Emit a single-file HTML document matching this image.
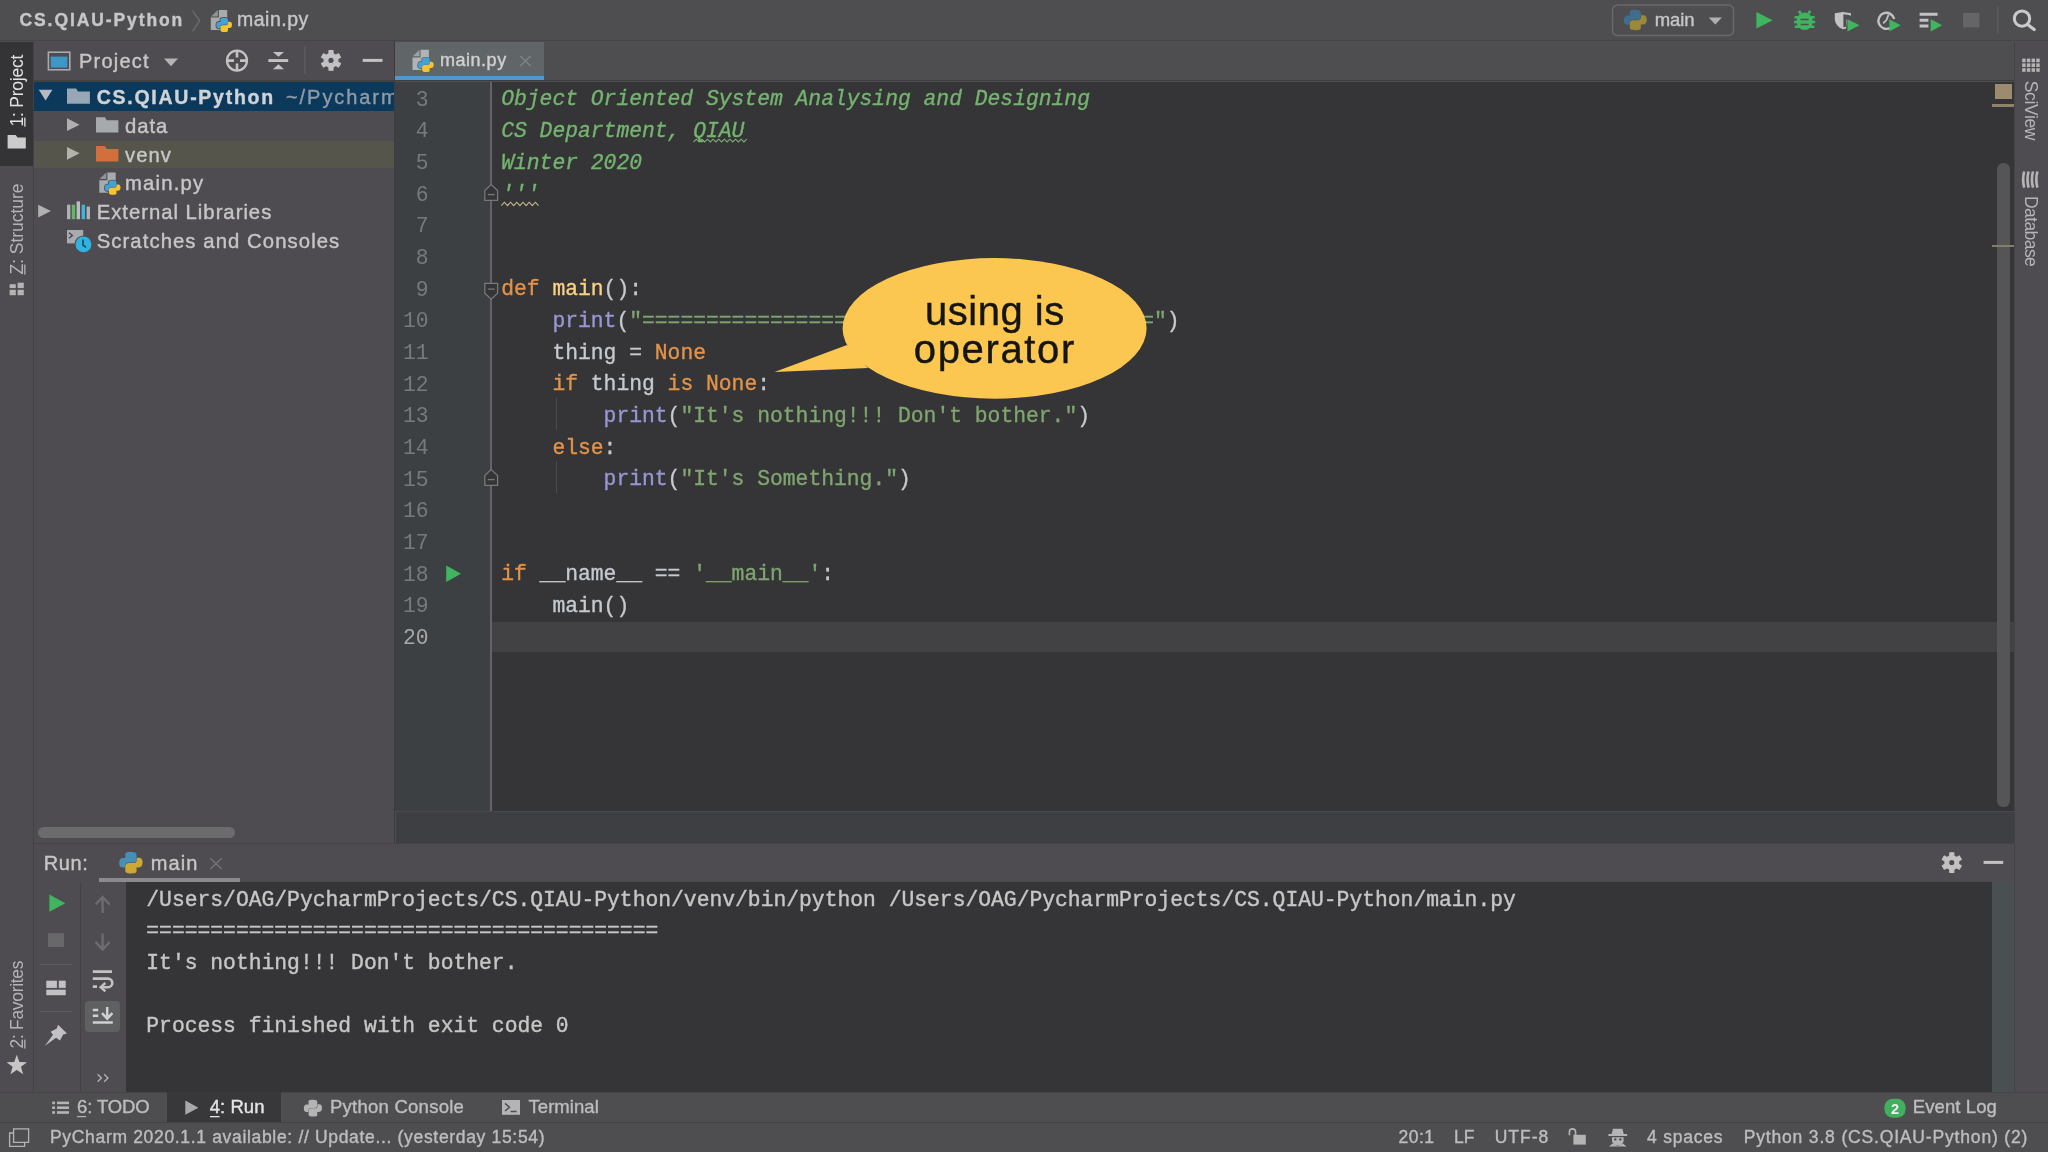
<!DOCTYPE html>
<html><head><meta charset="utf-8"><title>PyCharm</title>
<style>
*{box-sizing:border-box;margin:0;padding:0}
html,body{width:2048px;height:1152px;overflow:hidden;background:#4e4e50;font-family:"Liberation Sans",sans-serif;}
.a{position:absolute}
.t{position:absolute;white-space:pre;-webkit-text-stroke:0.4px currentColor;font-family:"Liberation Sans",sans-serif;}
.ln{position:absolute;left:395px;width:33.6px;text-align:right;font-family:"Liberation Mono",monospace;font-size:21.33px;height:32px;line-height:32px;white-space:pre;}
.cl{position:absolute;left:501.2px;font-family:"Liberation Mono",monospace;font-size:21.33px;height:32px;line-height:32px;white-space:pre;color:#c6cacf;-webkit-text-stroke:0.35px currentColor;}
.co{position:absolute;left:146.3px;font-family:"Liberation Mono",monospace;font-size:21.33px;height:32px;line-height:32px;white-space:pre;color:#c6c6c6;-webkit-text-stroke:0.4px currentColor;}
.kw{color:#e2934a} .s{color:#7fa56f} .doc{color:#73b46f;font-style:italic} .bi{color:#9a96d4} .fn{color:#f7d186}
.wav{}
.wav2{}
svg{position:absolute;overflow:visible}
#root{position:absolute;left:0;top:0;width:2048px;height:1152px;will-change:transform;}
</style></head><body><div id="root">
<!-- ===== base regions ===== -->
<div class="a" style="left:0;top:0;width:2048px;height:40px;background:#4e4e50"></div>
<div class="a" style="left:0;top:39.8px;width:2048px;height:1.7px;background:#454548"></div>
<!-- left stripe -->
<div class="a" style="left:0;top:42px;width:33px;height:1050px;background:#4f4c51"></div>
<div class="a" style="left:0;top:42px;width:33px;height:124px;background:#343437"></div>
<div class="a" style="left:33px;top:42px;width:1px;height:1050px;background:#434346"></div>
<!-- project panel -->
<div class="a" style="left:34px;top:42px;width:360px;height:801px;background:#4f4c51"></div>
<div class="a" style="left:34px;top:80px;width:360px;height:2px;background:#424245"></div>
<div class="a" style="left:34px;top:82px;width:360px;height:28.7px;background:#0b395c"></div>
<div class="a" style="left:34px;top:140.5px;width:360px;height:27.5px;background:#55554b"></div>
<div class="a" style="left:38.3px;top:826.6px;width:197px;height:11.4px;border-radius:6px;background:#6b6b6e"></div>
<div class="a" style="left:393.6px;top:42px;width:1.4px;height:801px;background:#3c3c3f"></div>
<!-- editor tab bar -->
<div class="a" style="left:395px;top:42px;width:1620px;height:38px;background:#4e4e50"></div>
<div class="a" style="left:395px;top:42px;width:148.8px;height:38px;background:#606667"></div>
<div class="a" style="left:395px;top:75.6px;width:148.8px;height:4.6px;background:#5695ca"></div>
<div class="a" style="left:395px;top:80.2px;width:1620px;height:1.3px;background:#3e3e41"></div>
<!-- editor -->
<div class="a" style="left:396px;top:81.5px;width:1619px;height:729px;background:#353436"></div>
<div class="a" style="left:395px;top:81.5px;width:96px;height:729px;background:#3d4043"></div>
<div class="a" style="left:491px;top:621.5px;width:1524px;height:30px;background:#424245"></div>
<div class="a" style="left:490.3px;top:81.5px;width:2px;height:729px;background:#636467"></div>
<div class="a" style="left:396px;top:810.6px;width:1619px;height:1.2px;background:#4a4a4d"></div>
<div class="a" style="left:396px;top:811.8px;width:1619px;height:31.2px;background:#3e3f43"></div>
<!-- indent guides -->
<div class="a" style="left:556px;top:398px;width:1px;height:32px;background:#4a4b4e"></div>
<div class="a" style="left:556px;top:461px;width:1px;height:32px;background:#4a4b4e"></div>
<!-- editor scrollbar -->
<div class="a" style="left:1997px;top:162.7px;width:12.8px;height:644px;border-radius:6.4px;background:#555558"></div>
<div class="a" style="left:1995px;top:83.5px;width:16.6px;height:15px;background:#9c8b6e"></div>
<div class="a" style="left:1992px;top:104.4px;width:22px;height:2.2px;background:#8e8268"></div>
<div class="a" style="left:1992px;top:245px;width:22px;height:2.2px;background:#837f68"></div>
<!-- right stripe -->
<div class="a" style="left:2015px;top:42px;width:33px;height:1050px;background:#4f4c51"></div>
<div class="a" style="left:2014px;top:42px;width:1px;height:1050px;background:#434346"></div>
<!-- run panel -->
<div class="a" style="left:34px;top:843px;width:1980px;height:39px;background:#4f4c51"></div>
<div class="a" style="left:34px;top:842.5px;width:1980px;height:1.5px;background:#434346"></div>
<div class="a" style="left:99px;top:878px;width:141px;height:4px;background:#8b8b8e"></div>
<div class="a" style="left:34px;top:882px;width:92px;height:210px;background:#4f4c51"></div>
<div class="a" style="left:79.5px;top:882px;width:1px;height:210px;background:#434346"></div>
<div class="a" style="left:126px;top:882px;width:1888px;height:210px;background:#353436"></div>
<div class="a" style="left:1992px;top:882px;width:22px;height:210px;background:#4a4f51"></div>
<div class="a" style="left:84.8px;top:1001px;width:35.5px;height:31.4px;border-radius:4px;background:#5e6062"></div>
<div class="a" style="left:40px;top:963.5px;width:32px;height:1px;background:#5d5d60"></div>
<div class="a" style="left:40px;top:1011px;width:32px;height:1px;background:#5d5d60"></div>
<!-- bottom bars -->
<div class="a" style="left:0;top:1092px;width:2048px;height:30px;background:#4e4e50"></div>
<div class="a" style="left:0;top:1091.5px;width:2048px;height:1px;background:#434346"></div>
<div class="a" style="left:167px;top:1092px;width:114px;height:30px;background:#38383b"></div>
<div class="a" style="left:0;top:1122px;width:2048px;height:30px;background:#4e4e50"></div>
<div class="a" style="left:0;top:1121.5px;width:2048px;height:1px;background:#434346"></div>

<!-- ===== code ===== -->
<div class='ln' style='top:83.81px;color:#78797c'>3</div>
<div class='cl' style='top:83.31px'><span class='doc'>Object Oriented System Analysing and Designing</span></div>
<div class='ln' style='top:115.47px;color:#78797c'>4</div>
<div class='cl' style='top:114.97px'><span class='doc'>CS Department, </span><span class='doc wav'>QIAU</span></div>
<div class='ln' style='top:147.13px;color:#78797c'>5</div>
<div class='cl' style='top:146.63px'><span class='doc'>Winter 2020</span></div>
<div class='ln' style='top:178.79px;color:#78797c'>6</div>
<div class='cl' style='top:178.29px'><span class='doc wav2'>'''</span></div>
<div class='ln' style='top:210.45px;color:#78797c'>7</div>
<div class='ln' style='top:242.11px;color:#78797c'>8</div>
<div class='ln' style='top:273.77px;color:#78797c'>9</div>
<div class='cl' style='top:273.27px'><span class='kw'>def </span><span class='fn'>main</span>():</div>
<div class='ln' style='top:305.43px;color:#78797c'>10</div>
<div class='cl' style='top:304.93px'>    <span class='bi'>print</span>(<span class='s'>&quot;========================================&quot;</span>)</div>
<div class='ln' style='top:337.09px;color:#78797c'>11</div>
<div class='cl' style='top:336.59px'>    thing = <span class='kw'>None</span></div>
<div class='ln' style='top:368.75px;color:#78797c'>12</div>
<div class='cl' style='top:368.25px'>    <span class='kw'>if</span> thing <span class='kw'>is None</span>:</div>
<div class='ln' style='top:400.41px;color:#78797c'>13</div>
<div class='cl' style='top:399.91px'>        <span class='bi'>print</span>(<span class='s'>&quot;It&#x27;s nothing!!! Don&#x27;t bother.&quot;</span>)</div>
<div class='ln' style='top:432.07px;color:#78797c'>14</div>
<div class='cl' style='top:431.57px'>    <span class='kw'>else</span>:</div>
<div class='ln' style='top:463.73px;color:#78797c'>15</div>
<div class='cl' style='top:463.23px'>        <span class='bi'>print</span>(<span class='s'>&quot;It&#x27;s Something.&quot;</span>)</div>
<div class='ln' style='top:495.39px;color:#78797c'>16</div>
<div class='ln' style='top:527.05px;color:#78797c'>17</div>
<div class='ln' style='top:558.71px;color:#78797c'>18</div>
<div class='cl' style='top:558.21px'><span class='kw'>if</span> __name__ == <span class='s'>&#x27;__main__&#x27;</span>:</div>
<div class='ln' style='top:590.37px;color:#78797c'>19</div>
<div class='cl' style='top:589.87px'>    main()</div>
<div class='ln' style='top:622.03px;color:#a9a9aa'>20</div>
<!-- ===== console ===== -->
<div class='co' style='top:883.51px'>/Users/OAG/PycharmProjects/CS.QIAU-Python/venv/bin/python /Users/OAG/PycharmProjects/CS.QIAU-Python/main.py</div>
<div class='co' style='top:915.25px'>========================================</div>
<div class='co' style='top:946.99px'>It&#x27;s nothing!!! Don&#x27;t bother.</div>
<div class='co' style='top:978.73px'></div>
<div class='co' style='top:1010.47px'>Process finished with exit code 0</div>
<!-- ===== bubble ===== -->
<svg style="left:0;top:0" width="2048" height="1152" viewBox="0 0 2048 1152">
 <path d="M774.5 371.9 L847 345 L868 368 Z" fill="#fbc750"/>
 <ellipse cx="994.6" cy="328.4" rx="152" ry="70.3" fill="#fbc750"/>
</svg>
<!-- ===== texts ===== -->
<div class='t' style="left:19.5px;top:8.64px;height:23px;line-height:23px;font-size:17.5px;font-weight:700;color:#c6c6c7;letter-spacing:1.901px;">CS.QIAU-Python</div>
<div class='t' style="left:237.0px;top:7.14px;height:25px;line-height:25px;font-size:19.5px;font-weight:400;color:#c6c6c7;letter-spacing:0.495px;">main.py</div>
<div class='t' style="left:1654.7px;top:7.99px;height:24px;line-height:24px;font-size:18.5px;font-weight:400;color:#c6c6c7;letter-spacing:-0.084px;">main</div>
<div class='t' style="left:79.0px;top:47.67px;height:26px;line-height:26px;font-size:20px;font-weight:400;color:#c6c6c7;letter-spacing:1.216px;">Project</div>
<div class='t' style="left:440.0px;top:48.96px;height:23px;line-height:23px;font-size:18px;font-weight:400;color:#d0d0d1;letter-spacing:0.518px;">main.py</div>
<div class='t' style="left:96.7px;top:84.94px;height:25px;line-height:25px;font-size:19.5px;font-weight:700;color:#cfd3d8;letter-spacing:1.741px;">CS.QIAU-Python</div>
<div class='t' style="left:286.0px;top:84.27px;height:26px;line-height:26px;font-size:20px;font-weight:400;color:#8f9aa6;letter-spacing:1.936px;width:108px;overflow:hidden;">~/Pycharm</div>
<div class='t' style="left:125.0px;top:112.97px;height:26px;line-height:26px;font-size:20.3px;font-weight:400;color:#c6c6c7;letter-spacing:0.950px;">data</div>
<div class='t' style="left:125.0px;top:141.67px;height:26px;line-height:26px;font-size:20.3px;font-weight:400;color:#c6c6c7;letter-spacing:1.015px;">venv</div>
<div class='t' style="left:125.0px;top:170.37px;height:26px;line-height:26px;font-size:20.3px;font-weight:400;color:#c6c6c7;letter-spacing:1.192px;">main.py</div>
<div class='t' style="left:96.7px;top:199.07px;height:26px;line-height:26px;font-size:20.3px;font-weight:400;color:#c6c6c7;letter-spacing:0.987px;">External Libraries</div>
<div class='t' style="left:96.7px;top:227.77px;height:26px;line-height:26px;font-size:20.3px;font-weight:400;color:#c6c6c7;letter-spacing:1.081px;">Scratches and Consoles</div>
<div class='t' style="left:43.8px;top:850.37px;height:26px;line-height:26px;font-size:20px;font-weight:400;color:#c6c6c7;letter-spacing:0.622px;">Run:</div>
<div class='t' style="left:150.8px;top:850.37px;height:26px;line-height:26px;font-size:20px;font-weight:400;color:#c6c6c7;letter-spacing:1.038px;">main</div>
<div class='t' style="left:77.0px;top:1095.29px;height:24px;line-height:24px;font-size:18.5px;font-weight:400;color:#bcbcbd;letter-spacing:-0.111px;">6: TODO</div>
<div class='t' style="left:209.8px;top:1095.29px;height:24px;line-height:24px;font-size:18.5px;font-weight:400;color:#e4e4e4;letter-spacing:0.032px;">4: Run</div>
<div class='t' style="left:330.0px;top:1095.29px;height:24px;line-height:24px;font-size:18.5px;font-weight:400;color:#bcbcbd;letter-spacing:0.246px;">Python Console</div>
<div class='t' style="left:528.5px;top:1095.29px;height:24px;line-height:24px;font-size:18.5px;font-weight:400;color:#bcbcbd;letter-spacing:0.049px;">Terminal</div>
<div class='t' style="left:1912.8px;top:1095.09px;height:24px;line-height:24px;font-size:18.5px;font-weight:400;color:#bcbcbd;letter-spacing:0.089px;">Event Log</div>
<div class='t' style="left:50.0px;top:1126.04px;height:23px;line-height:23px;font-size:17.5px;font-weight:400;color:#bcbcbd;letter-spacing:0.672px;">PyCharm 2020.1.1 available: // Update... (yesterday 15:54)</div>
<div class='t' style="left:1398.6px;top:1126.04px;height:23px;line-height:23px;font-size:17.5px;font-weight:400;color:#bcbcbd;letter-spacing:0.470px;">20:1</div>
<div class='t' style="left:1454.0px;top:1126.04px;height:23px;line-height:23px;font-size:17.5px;font-weight:400;color:#bcbcbd;letter-spacing:0.096px;">LF</div>
<div class='t' style="left:1494.7px;top:1126.04px;height:23px;line-height:23px;font-size:17.5px;font-weight:400;color:#bcbcbd;letter-spacing:1.005px;">UTF-8</div>
<div class='t' style="left:1647.0px;top:1126.04px;height:23px;line-height:23px;font-size:17.5px;font-weight:400;color:#bcbcbd;letter-spacing:0.773px;">4 spaces</div>
<div class='t' style="left:1743.7px;top:1126.04px;height:23px;line-height:23px;font-size:17.5px;font-weight:400;color:#bcbcbd;letter-spacing:0.833px;">Python 3.8 (CS.QIAU-Python) (2)</div>
<div class='t' style="left:925.0px;top:284.64px;height:52px;line-height:52px;font-size:40px;font-weight:400;color:#151515;letter-spacing:0.503px;">using is</div>
<div class='t' style="left:913.8px;top:322.64px;height:52px;line-height:52px;font-size:40px;font-weight:400;color:#151515;letter-spacing:1.651px;">operator</div>
<!-- ===== icons ===== -->
<svg style="left:0;top:0" width="2048" height="1152" viewBox="0 0 2048 1152">
<path d="M192.6 10.5 L199.6 20.8 L192.6 31.2" fill="none" stroke="#6f6f72" stroke-width="1.3"/>
<g transform="translate(210.8 9.9)"><path d="M0.2 6.5 L7 0 L7 6.5 Z" fill="#a7abad" opacity="0.75"/><path d="M8.1 0 H16.4 V20.2 H0 V7.7 H8.1 Z" fill="#a7abad"/></g><g transform="translate(216.4 17.9) scale(1.560 1.420)"><path d="M2.6 .9C2.6 .3 3.3 0 5 0 6.7 0 7.4 .4 7.4 1.4V3.6C7.4 4.4 6.8 4.9 6 4.9H3.9C3 4.9 2.5 5.5 2.5 6.3V7.3H1.5C.5 7.3 0 6.4 0 5.1 0 3.6 .6 2.8 1.6 2.8H2.6Z" fill="#4e4e50" stroke="#4e4e50" stroke-width="1.1"/><path d="M2.6 .9C2.6 .3 3.3 0 5 0 6.7 0 7.4 .4 7.4 1.4V3.6C7.4 4.4 6.8 4.9 6 4.9H3.9C3 4.9 2.5 5.5 2.5 6.3V7.3H1.5C.5 7.3 0 6.4 0 5.1 0 3.6 .6 2.8 1.6 2.8H2.6Z" transform="rotate(180 5 5)" fill="#4e4e50" stroke="#4e4e50" stroke-width="1.1"/><path d="M2.6 .9C2.6 .3 3.3 0 5 0 6.7 0 7.4 .4 7.4 1.4V3.6C7.4 4.4 6.8 4.9 6 4.9H3.9C3 4.9 2.5 5.5 2.5 6.3V7.3H1.5C.5 7.3 0 6.4 0 5.1 0 3.6 .6 2.8 1.6 2.8H2.6Z" fill="#3fa3d3"/><path d="M2.6 .9C2.6 .3 3.3 0 5 0 6.7 0 7.4 .4 7.4 1.4V3.6C7.4 4.4 6.8 4.9 6 4.9H3.9C3 4.9 2.5 5.5 2.5 6.3V7.3H1.5C.5 7.3 0 6.4 0 5.1 0 3.6 .6 2.8 1.6 2.8H2.6Z" transform="rotate(180 5 5)" fill="#f3c433"/></g>
<rect x="1612.5" y="5" width="121" height="30.4" rx="5" fill="none" stroke="#69696c" stroke-width="1.5"/>
<g transform="translate(1623.8 9.8) scale(2.300 2.040)"><path d="M2.6 .9C2.6 .3 3.3 0 5 0 6.7 0 7.4 .4 7.4 1.4V3.6C7.4 4.4 6.8 4.9 6 4.9H3.9C3 4.9 2.5 5.5 2.5 6.3V7.3H1.5C.5 7.3 0 6.4 0 5.1 0 3.6 .6 2.8 1.6 2.8H2.6Z" fill="#3f6d8e"/><path d="M2.6 .9C2.6 .3 3.3 0 5 0 6.7 0 7.4 .4 7.4 1.4V3.6C7.4 4.4 6.8 4.9 6 4.9H3.9C3 4.9 2.5 5.5 2.5 6.3V7.3H1.5C.5 7.3 0 6.4 0 5.1 0 3.6 .6 2.8 1.6 2.8H2.6Z" transform="rotate(180 5 5)" fill="#9b8838"/></g>
<path d="M1708.7 17.5 L1721.9 17.5 L1715.3000000000002 24.6 Z" fill="#b0b0b1"/>
<path d="M1756.4 12 L1772.6 20.2 L1756.4 28.4 Z" fill="#40b45f"/>
<g fill="#40b45f" stroke="#40b45f"><ellipse cx="1804.6" cy="21.3" rx="8" ry="8.8" stroke="none"/><path d="M1800.8 13.8 L1799 10.9 M1808.4 13.8 L1810.2 10.9" stroke-width="2.6" fill="none"/><path d="M1794.6 17.2 H1814.6 M1794 22 H1815.2 M1794.8 26.8 H1814.4" stroke-width="2.6" fill="none"/></g><path d="M1800.6 19.6 H1808.6 M1800.6 24.4 H1808.6" stroke="#4e4e50" stroke-width="1.5"/>
<path d="M1834.8 13.2 L1843 11.9 L1851 13.2 V15.5 H1847 V19 L1846 28.4 L1843 29.3 C1838.5 27.5 1834.8 24 1834.8 18.5 Z" fill="#c2c2c3"/>
<path d="M1843.4 14.2 L1849.2 15 V18 L1846.3 20 L1846.3 26.5 L1843.4 27.3 Z" fill="#4e4e50"/>
<path d="M1847.5 19.3 L1859.6 25.35 L1847.5 31.4 Z" fill="#40b45f"/>
<path d="M1890 28 A8 8 0 1 1 1894.2 19" fill="none" stroke="#c2c2c3" stroke-width="2.4"/>
<path d="M1888.6 14.6 L1886.4 20 L1883.2 23.4" fill="none" stroke="#c2c2c3" stroke-width="1.8"/>
<path d="M1889.3 19.3 L1900.8 25.35 L1889.3 31.4 Z" fill="#40b45f"/>
<path d="M1919.6 14.2 H1937.6 M1919.6 20.3 H1928.4 M1919.6 26 H1928.4" stroke="#c2c2c3" stroke-width="3" fill="none"/>
<path d="M1930.7 19.3 L1942.2 25.35 L1930.7 31.4 Z" fill="#40b45f"/>
<rect x="1963" y="13" width="16.4" height="14.4" fill="#656568"/>
<rect x="1997.2" y="6.4" width="1.2" height="27.2" fill="#5f5f62"/>
<circle cx="2022" cy="18.6" r="7.7" fill="none" stroke="#cacacb" stroke-width="3"/>
<path d="M2027.6 24.4 L2034.2 29.6" stroke="#cacacb" stroke-width="3.2" stroke-linecap="round"/>
<rect x="48.4" y="52.2" width="21.4" height="17.6" fill="none" stroke="#a7abad" stroke-width="1.6"/>
<rect x="50.8" y="56.6" width="16.6" height="11" fill="#3e97c6"/>
<path d="M164 58.6 L178 58.6 L171.0 66.2 Z" fill="#b4b4b5"/>
<circle cx="237" cy="60.6" r="10" fill="none" stroke="#c2c2c3" stroke-width="2.3"/>
<path d="M237 51 V57.6 M237 63.6 V70.2 M227.4 60.6 H234 M240 60.6 H246.6" stroke="#c2c2c3" stroke-width="2.6"/>
<rect x="268.4" y="59.1" width="19.8" height="2.9" fill="#c2c2c3"/>
<path d="M272.9 52 H284 L278.45 56.8 Z M272.9 69.2 H284 L278.45 64.3 Z" fill="#c2c2c3"/>
<rect x="304.2" y="46" width="1.3" height="28.5" fill="#5b5b5e"/>
<path d="M328.93 53.71 L329.01 50.60 L332.99 50.60 L333.07 53.71 L335.76 55.26 L338.49 53.78 L340.48 57.22 L337.83 58.85 L337.83 61.95 L340.48 63.58 L338.49 67.02 L335.76 65.54 L333.07 67.09 L332.99 70.20 L329.01 70.20 L328.93 67.09 L326.24 65.54 L323.51 67.02 L321.52 63.58 L324.17 61.95 L324.17 58.85 L321.52 57.22 L323.51 53.78 L326.24 55.26 Z M334.20 60.40 A3.2 3.2 0 1 0 327.80 60.40 A3.2 3.2 0 1 0 334.20 60.40 Z" fill="#c2c2c3" fill-rule="evenodd" stroke="#c2c2c3" stroke-width="1.2" stroke-linejoin="round"/>
<rect x="362.7" y="58.9" width="19.8" height="3" fill="#c2c2c3"/>
<path d="M38.8 89.7 L52.4 89.7 L45.599999999999994 100.4 Z" fill="#b6bac0"/>
<path d="M67 88.4 H76.16 L77.99 91.48 H89.9 V103.80000000000001 H67 Z" fill="#98a6b5"/>
<path d="M67 118.3 L79.6 124.65 L67 131 Z" fill="#b0b0b1"/>
<path d="M96 117.2 H104.96 L106.75 120.28 H118.4 V132.6 H96 Z" fill="#a6aaac"/>
<path d="M67 147 L79.6 153.35 L67 159.7 Z" fill="#b3b3ad"/>
<path d="M96 145.9 H104.96 L106.75 149.02 H118.4 V161.5 H96 Z" fill="#d26f3b"/>
<g transform="translate(99.3 172.6)"><path d="M0.2 6.5 L7 0 L7 6.5 Z" fill="#a7abad" opacity="0.75"/><path d="M8.1 0 H16.4 V20.2 H0 V7.7 H8.1 Z" fill="#a7abad"/></g><g transform="translate(104.89999999999999 180.6) scale(1.560 1.420)"><path d="M2.6 .9C2.6 .3 3.3 0 5 0 6.7 0 7.4 .4 7.4 1.4V3.6C7.4 4.4 6.8 4.9 6 4.9H3.9C3 4.9 2.5 5.5 2.5 6.3V7.3H1.5C.5 7.3 0 6.4 0 5.1 0 3.6 .6 2.8 1.6 2.8H2.6Z" fill="#4e4e50" stroke="#4e4e50" stroke-width="1.1"/><path d="M2.6 .9C2.6 .3 3.3 0 5 0 6.7 0 7.4 .4 7.4 1.4V3.6C7.4 4.4 6.8 4.9 6 4.9H3.9C3 4.9 2.5 5.5 2.5 6.3V7.3H1.5C.5 7.3 0 6.4 0 5.1 0 3.6 .6 2.8 1.6 2.8H2.6Z" transform="rotate(180 5 5)" fill="#4e4e50" stroke="#4e4e50" stroke-width="1.1"/><path d="M2.6 .9C2.6 .3 3.3 0 5 0 6.7 0 7.4 .4 7.4 1.4V3.6C7.4 4.4 6.8 4.9 6 4.9H3.9C3 4.9 2.5 5.5 2.5 6.3V7.3H1.5C.5 7.3 0 6.4 0 5.1 0 3.6 .6 2.8 1.6 2.8H2.6Z" fill="#3fa3d3"/><path d="M2.6 .9C2.6 .3 3.3 0 5 0 6.7 0 7.4 .4 7.4 1.4V3.6C7.4 4.4 6.8 4.9 6 4.9H3.9C3 4.9 2.5 5.5 2.5 6.3V7.3H1.5C.5 7.3 0 6.4 0 5.1 0 3.6 .6 2.8 1.6 2.8H2.6Z" transform="rotate(180 5 5)" fill="#f3c433"/></g>
<path d="M38.2 204.7 L50.9 211.1 L38.2 217.5 Z" fill="#b0b0b1"/>
<rect x="67" y="204.7" width="3.4" height="14.5" fill="#aeb1b3"/>
<rect x="71.8" y="204.7" width="3.4" height="14.5" fill="#60b966"/>
<rect x="76.6" y="201.4" width="3.4" height="17.8" fill="#bbbec0"/>
<rect x="81.6" y="204.7" width="3.4" height="14.5" fill="#40b4dc"/>
<rect x="86.6" y="206.6" width="3.4" height="12.6" fill="#aeb1b3"/>
<rect x="67" y="230" width="16.2" height="13.4" fill="#a7abad"/>
<path d="M69 232.6 L72.4 235.4 L69 238.2" fill="none" stroke="#4f4c51" stroke-width="1.4"/>
<circle cx="83.5" cy="244.4" r="9" fill="#4f4c51"/>
<circle cx="83.5" cy="244.4" r="7.9" fill="#2fb3e2"/>
<path d="M83 239.6 V245 L86 247.4" fill="none" stroke="#2d4250" stroke-width="1.6"/>
<g transform="translate(412.5 49.8)"><path d="M0.2 6.5 L7 0 L7 6.5 Z" fill="#b0b4b6" opacity="0.75"/><path d="M8.1 0 H16.4 V20.2 H0 V7.7 H8.1 Z" fill="#b0b4b6"/></g><g transform="translate(418.1 57.8) scale(1.560 1.420)"><path d="M2.6 .9C2.6 .3 3.3 0 5 0 6.7 0 7.4 .4 7.4 1.4V3.6C7.4 4.4 6.8 4.9 6 4.9H3.9C3 4.9 2.5 5.5 2.5 6.3V7.3H1.5C.5 7.3 0 6.4 0 5.1 0 3.6 .6 2.8 1.6 2.8H2.6Z" fill="#606667" stroke="#606667" stroke-width="1.1"/><path d="M2.6 .9C2.6 .3 3.3 0 5 0 6.7 0 7.4 .4 7.4 1.4V3.6C7.4 4.4 6.8 4.9 6 4.9H3.9C3 4.9 2.5 5.5 2.5 6.3V7.3H1.5C.5 7.3 0 6.4 0 5.1 0 3.6 .6 2.8 1.6 2.8H2.6Z" transform="rotate(180 5 5)" fill="#606667" stroke="#606667" stroke-width="1.1"/><path d="M2.6 .9C2.6 .3 3.3 0 5 0 6.7 0 7.4 .4 7.4 1.4V3.6C7.4 4.4 6.8 4.9 6 4.9H3.9C3 4.9 2.5 5.5 2.5 6.3V7.3H1.5C.5 7.3 0 6.4 0 5.1 0 3.6 .6 2.8 1.6 2.8H2.6Z" fill="#3fa3d3"/><path d="M2.6 .9C2.6 .3 3.3 0 5 0 6.7 0 7.4 .4 7.4 1.4V3.6C7.4 4.4 6.8 4.9 6 4.9H3.9C3 4.9 2.5 5.5 2.5 6.3V7.3H1.5C.5 7.3 0 6.4 0 5.1 0 3.6 .6 2.8 1.6 2.8H2.6Z" transform="rotate(180 5 5)" fill="#f3c433"/></g>
<path d="M520.2 56 L530.6 66 M530.6 56 L520.2 66" stroke="#82868a" stroke-width="1.3"/>
<text transform="translate(17 126.5) rotate(-90)" x="0" y="6.12" font-family="Liberation Sans" font-size="17.5" fill="#e2e2e2" textLength="71.8" lengthAdjust="spacing">1: Project</text>
<rect x="24.2" y="117.6" width="1.3" height="9" fill="#e2e2e2"/>
<path d="M7.6 135 H15.6 L17.6 137.6 H25.8 V148.4 H7.6 Z" fill="#cbcbcc"/>
<text transform="translate(17 274.5) rotate(-90)" x="0" y="6.12" font-family="Liberation Sans" font-size="17.5" fill="#b4b4b5" textLength="91.0" lengthAdjust="spacing">Z: Structure</text>
<rect x="24.2" y="264.6" width="1.3" height="10" fill="#b4b4b5"/>
<g fill="#b4b4b5"><rect x="17.6" y="282.7" width="6.2" height="5.4"/><rect x="9.6" y="284.2" width="6.2" height="3.9"/><rect x="9.6" y="289.8" width="6.2" height="5.4"/><rect x="17.6" y="289.8" width="6.2" height="5.4"/></g>
<text transform="translate(17 1048.5) rotate(-90)" x="0" y="6.12" font-family="Liberation Sans" font-size="17.5" fill="#b4b4b5" textLength="88.0" lengthAdjust="spacing">2: Favorites</text>
<rect x="24.2" y="1039.6" width="1.3" height="9" fill="#b4b4b5"/>
<path d="M16.80 1054.70 L19.39 1061.94 L27.07 1062.16 L20.98 1066.86 L23.15 1074.24 L16.80 1069.90 L10.45 1074.24 L12.62 1066.86 L6.53 1062.16 L14.21 1061.94 Z" fill="#c6c6c7"/>
<g fill="#b4b4b5"><rect x="2022.2" y="58.6" width="3.4" height="3.6"/><rect x="2022.2" y="63.4" width="3.4" height="3.6"/><rect x="2022.2" y="68.2" width="3.4" height="3.6"/><rect x="2026.9" y="58.6" width="3.4" height="3.6"/><rect x="2026.9" y="63.4" width="3.4" height="3.6"/><rect x="2026.9" y="68.2" width="3.4" height="3.6"/><rect x="2031.6" y="58.6" width="3.4" height="3.6"/><rect x="2031.6" y="63.4" width="3.4" height="3.6"/><rect x="2031.6" y="68.2" width="3.4" height="3.6"/><rect x="2036.3" y="58.6" width="3.4" height="3.6"/><rect x="2036.3" y="63.4" width="3.4" height="3.6"/><rect x="2036.3" y="68.2" width="3.4" height="3.6"/></g>
<text transform="translate(2031.5 80.8) rotate(90)" x="0" y="6.12" font-family="Liberation Sans" font-size="17.5" fill="#b4b4b5" textLength="59.7" lengthAdjust="spacing">SciView</text>
<g fill="none" stroke="#b4b4b5" stroke-width="2.6"><path d="M2024.2 171.5 Q2022.0 179.6 2024.2 187.6"/><path d="M2028.6 171.5 Q2026.4 179.6 2028.6 187.6"/><path d="M2033.0 171.5 Q2030.8 179.6 2033.0 187.6"/><path d="M2037.4 171.5 Q2035.2 179.6 2037.4 187.6"/></g>
<text transform="translate(2031.5 196) rotate(90)" x="0" y="6.12" font-family="Liberation Sans" font-size="17.5" fill="#b4b4b5" textLength="70.8" lengthAdjust="spacing">Database</text>
<path d="M484.8 200.4 V190.6 L491.2 184.6 L497.59999999999997 190.6 V200.4 Z" fill="#353436" stroke="#77787b" stroke-width="1.3"/><path d="M487.8 194.6 H494.59999999999997" stroke="#77787b" stroke-width="1.3"/>
<path d="M484.8 283.3 V293.1 L491.2 299.1 L497.59999999999997 293.1 V283.3 Z" fill="#353436" stroke="#77787b" stroke-width="1.3"/><path d="M487.8 289.1 H494.59999999999997" stroke="#77787b" stroke-width="1.3"/>
<path d="M484.8 485.40000000000003 V475.6 L491.2 469.6 L497.59999999999997 475.6 V485.40000000000003 Z" fill="#353436" stroke="#77787b" stroke-width="1.3"/><path d="M487.8 479.6 H494.59999999999997" stroke="#77787b" stroke-width="1.3"/>
<path d="M446.2 565.6 L461 573.8 L446.2 582 Z" fill="#40b45f"/>
<path d="M501.3 205.6 L504.4 202.2 L507.5 205.6 L510.6 202.2 L513.7 205.6 L516.8 202.2 L519.9 205.6 L523.0 202.2 L526.1 205.6 L529.2 202.2 L532.3 205.6 L535.4 202.2 L538.5 205.6" fill="none" stroke="#c3bd8c" stroke-width="1.1"/>
<path d="M693.5 142.0 L696.3 139.2 L699.1 142.0 L701.9 139.2 L704.7 142.0 L707.5 139.2 L710.3 142.0 L713.1 139.2 L715.9 142.0 L718.7 139.2 L721.5 142.0 L724.3 139.2 L727.1 142.0 L729.9 139.2 L732.7 142.0 L735.5 139.2 L738.3 142.0 L741.1 139.2 L743.9 142.0 L746.7 139.2" fill="none" stroke="#7fae79" stroke-width="1.1"/>
<g transform="translate(119.2 852) scale(2.340 2.140)"><path d="M2.6 .9C2.6 .3 3.3 0 5 0 6.7 0 7.4 .4 7.4 1.4V3.6C7.4 4.4 6.8 4.9 6 4.9H3.9C3 4.9 2.5 5.5 2.5 6.3V7.3H1.5C.5 7.3 0 6.4 0 5.1 0 3.6 .6 2.8 1.6 2.8H2.6Z" fill="#4690b8"/><path d="M2.6 .9C2.6 .3 3.3 0 5 0 6.7 0 7.4 .4 7.4 1.4V3.6C7.4 4.4 6.8 4.9 6 4.9H3.9C3 4.9 2.5 5.5 2.5 6.3V7.3H1.5C.5 7.3 0 6.4 0 5.1 0 3.6 .6 2.8 1.6 2.8H2.6Z" transform="rotate(180 5 5)" fill="#cda835"/></g>
<path d="M210.4 858.4 L221.6 869 M221.6 858.4 L210.4 869" stroke="#77777a" stroke-width="1.3"/>
<path d="M1949.73 855.91 L1949.81 852.80 L1953.79 852.80 L1953.87 855.91 L1956.56 857.46 L1959.29 855.98 L1961.28 859.42 L1958.63 861.05 L1958.63 864.15 L1961.28 865.78 L1959.29 869.22 L1956.56 867.74 L1953.87 869.29 L1953.79 872.40 L1949.81 872.40 L1949.73 869.29 L1947.04 867.74 L1944.31 869.22 L1942.32 865.78 L1944.97 864.15 L1944.97 861.05 L1942.32 859.42 L1944.31 855.98 L1947.04 857.46 Z M1955.00 862.60 A3.2 3.2 0 1 0 1948.60 862.60 A3.2 3.2 0 1 0 1955.00 862.60 Z" fill="#c2c2c3" fill-rule="evenodd" stroke="#c2c2c3" stroke-width="1.2" stroke-linejoin="round"/>
<rect x="1983.6" y="860.9" width="19.6" height="3" fill="#c2c2c3"/>
<path d="M49.4 894.6 L65.3 903.2 L49.4 911.8 Z" fill="#40b45f"/>
<rect x="48" y="933.2" width="16" height="13.8" fill="#68686b"/>
<g fill="#c2c2c3"><rect x="46.3" y="980.7" width="10.6" height="7.2"/><rect x="58.8" y="980.7" width="6.9" height="7.2"/><rect x="46.3" y="989.7" width="19.4" height="5.5"/></g>
<path d="M58 1024.8 L67 1033.5 L63.2 1034.6 L60 1040.4 L56 1037.8 L45 1045.8 L53 1034.8 L50.6 1031.8 L56.8 1028.6 Z" fill="#c2c2c3"/>
<path d="M102.6 913 V897.5 M95.6 904.5 L102.6 897 L109.6 904.5" fill="none" stroke="#6d6d70" stroke-width="2.3"/>
<path d="M102.6 933.4 V949 M95.6 942 L102.6 949.6 L109.6 942" fill="none" stroke="#6d6d70" stroke-width="2.3"/>
<path d="M92.8 971.6 H112 M92.8 978.6 H108 A4.3 4.3 0 0 1 108 987.2 H101.5 M92.8 986.6 H97" fill="none" stroke="#c2c2c3" stroke-width="2.6"/>
<path d="M105.4 983 L100.6 987.2 L105.4 991.4" fill="none" stroke="#c2c2c3" stroke-width="2.4"/>
<path d="M92.8 1010 H98.2 M92.8 1015.8 H98.2 M92.8 1022.4 H112.8 M107.2 1007 V1017.5 M102 1013.2 L107.2 1018.6 L112.4 1013.2" fill="none" stroke="#d0d0d1" stroke-width="2.5"/>
<path d="M97.6 1074.2 L101.4 1078 L97.6 1081.8 M104.2 1074.2 L108 1078 L104.2 1081.8" fill="none" stroke="#b4b4b5" stroke-width="1.3"/>
<g fill="#b4b4b5"><rect x="52.2" y="1101.6" width="2.8" height="2.6"/><rect x="57" y="1101.6" width="12" height="2.6"/><rect x="52.2" y="1106.4" width="2.8" height="2.6"/><rect x="57" y="1106.4" width="12" height="2.6"/><rect x="52.2" y="1111.2" width="2.8" height="2.6"/><rect x="57" y="1111.2" width="12" height="2.6"/></g>
<rect x="77" y="1116" width="9" height="1.2" fill="#b4b4b5"/>
<path d="M185.3 1100.6 L198.4 1107.6999999999998 L185.3 1114.8 Z" fill="#a9a9aa"/>
<rect x="210" y="1116" width="9.5" height="1.3" fill="#e4e4e4"/>
<g transform="translate(303.8 1099.8) scale(1.820 1.680)"><path d="M2.6 .9C2.6 .3 3.3 0 5 0 6.7 0 7.4 .4 7.4 1.4V3.6C7.4 4.4 6.8 4.9 6 4.9H3.9C3 4.9 2.5 5.5 2.5 6.3V7.3H1.5C.5 7.3 0 6.4 0 5.1 0 3.6 .6 2.8 1.6 2.8H2.6Z" fill="#b4b4b5"/><path d="M2.6 .9C2.6 .3 3.3 0 5 0 6.7 0 7.4 .4 7.4 1.4V3.6C7.4 4.4 6.8 4.9 6 4.9H3.9C3 4.9 2.5 5.5 2.5 6.3V7.3H1.5C.5 7.3 0 6.4 0 5.1 0 3.6 .6 2.8 1.6 2.8H2.6Z" transform="rotate(180 5 5)" fill="#b4b4b5"/></g>
<rect x="502" y="1100" width="18" height="14.8" fill="#b4b4b5"/>
<path d="M505 1103.4 L509.4 1107.2 L505 1111 M510.6 1111.6 H516.6" fill="none" stroke="#4e4e50" stroke-width="1.5"/>
<rect x="1884.4" y="1098.8" width="21.2" height="19" rx="8.5" fill="#40b05e"/>
<text x="1895" y="1114.2" text-anchor="middle" font-family="Liberation Sans" font-weight="700" font-size="14.5" fill="#f0f0f0">2</text>
<path d="M13.6 1128.8 H28.6 V1142.4 H13.6 Z M13.6 1133 H9.6 V1146.4 H24.6 V1142.4" fill="none" stroke="#b4b4b5" stroke-width="1.3"/>
<rect x="1573.4" y="1134.8" width="12.4" height="9.8" fill="#b4b4b5"/>
<path d="M1569.4 1135.2 V1132 A3.1 3.1 0 0 1 1575.6 1132 V1135" fill="none" stroke="#b4b4b5" stroke-width="1.6"/>
<g fill="#b4b4b5"><path d="M1611.4 1135 L1613 1128.8 L1622.4 1128.8 L1624 1135 Z"/><rect x="1608.4" y="1134" width="18.8" height="2"/><path d="M1612 1137.2 H1623.6 V1140.4 A5.8 5.2 0 0 1 1612 1140.4 Z"/><path d="M1609 1146.6 L1612.6 1143.6 L1617.8 1146 L1623 1143.6 L1626.6 1146.6 Z"/></g>
<circle cx="1615.3" cy="1139.4" r="1.2" fill="#4e4e50"/><circle cx="1620.3" cy="1139.4" r="1.2" fill="#4e4e50"/>
</svg>

</div></body></html>
